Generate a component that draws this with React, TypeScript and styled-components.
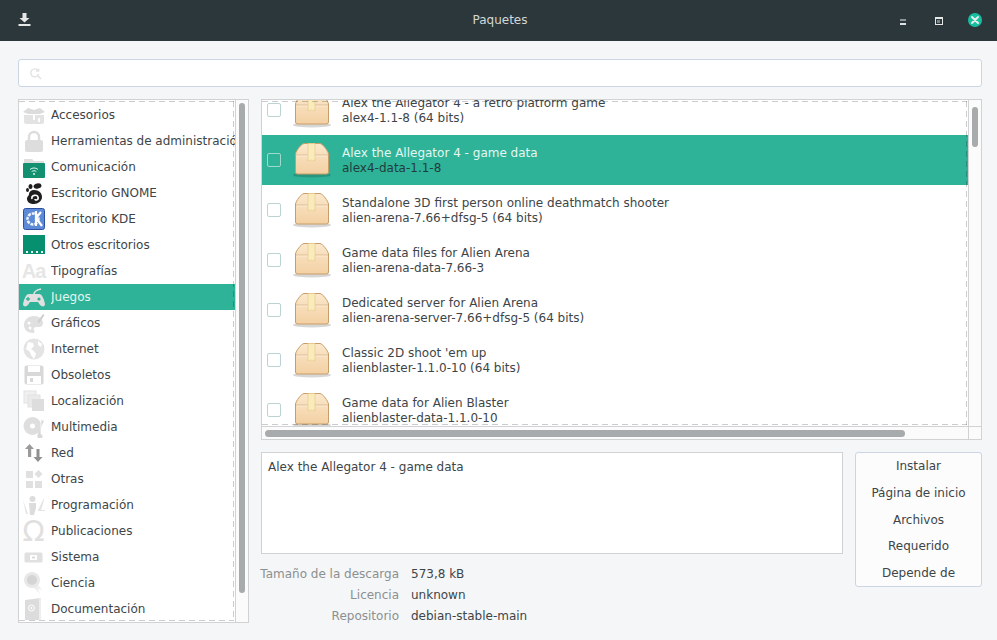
import React from "react";
import styled, { createGlobalStyle } from "styled-components";

const Global = createGlobalStyle`
  html, body { margin: 0; padding: 0; height: 100%; background: #f5f6f7; }
  body { font-family: "DejaVu Sans", sans-serif; font-size: 12px; color: #3d4548; overflow: hidden; }
  * { box-sizing: border-box; }
`;

const Win = styled.div`
  width: 997px; height: 640px; display: flex; flex-direction: column; background: #f5f6f7;
`;
const TitleBar = styled.header`
  height: 41px; flex: none; background: #2c373c; color: #d3d7d8; display: grid;
  grid-template-columns: 1fr auto 1fr; align-items: center; padding: 0 15px 1px 18px;
`;
const TitleText = styled.div`font-size: 12px; text-align: center; padding-bottom: 1px;`;
const WinButtons = styled.div`display: flex; justify-content: flex-end; align-items: center; gap: 25px;`;
const Content = styled.main`
  flex: 1; display: flex; flex-direction: column; padding: 18px 15px 17px 18px; gap: 12px; min-height: 0;
`;
const Search = styled.div`
  height: 28px; flex: none; background: #fff; border: 1px solid #ccd5e4; border-radius: 3px;
  display: flex; align-items: center; padding-left: 10px;
`;
const Columns = styled.div`
  flex: 1; display: grid; grid-template-columns: 231px 1fr; gap: 12px; min-height: 0;
`;
const Panel = styled.section`
  position: relative; display: flex; background: #fff; border: 1px solid #d0d2d3; overflow: hidden; min-height: 0;
`;
const dash = "rgba(0,0,0,0.2)";
const Dashed = styled.div<{ $right: number; $bottom: number }>`
  position: absolute; left: 0; top: 1px; right: ${p => p.$right}px; bottom: ${p => p.$bottom}px;
  pointer-events: none; z-index: 2;
  background:
    repeating-linear-gradient(90deg, ${dash} 0 6px, transparent 6px 10px) left top / 100% 1px no-repeat,
    repeating-linear-gradient(90deg, ${dash} 0 6px, transparent 6px 10px) left bottom / 100% 1px no-repeat,
    repeating-linear-gradient(180deg, ${dash} 0 6px, transparent 6px 10px) right top / 1px 100% no-repeat;
`;
const SideList = styled.ul`
  list-style: none; margin: 0; padding: 2px 0 0; width: 216px; flex: none; overflow: hidden;
`;
const SideRow = styled.li<{ $on?: boolean }>`
  height: 26px; display: flex; align-items: center; gap: 6px; padding-left: 3px; white-space: nowrap;
  background: ${p => (p.$on ? "#2eb398" : "transparent")};
  color: ${p => (p.$on ? "#e4f6f1" : "#3d4548")};
`;
const SideLabel = styled.span`flex: 1; min-width: 0; overflow: hidden; line-height: 16px;`;
const SideIcon = styled.span`
  width: 23px; height: 24px; flex: none; display: flex; align-items: center; justify-content: center;
`;
const OmegaIcon = styled.span`
  font-size: 29px; line-height: 24px; color: #e0e0e0; font-family: "DejaVu Sans", sans-serif;
`;
const AaIcon = styled.span`
  font-size: 20px; font-weight: 700; line-height: 24px; color: #e6e6e6; letter-spacing: -1px;
  font-family: "Liberation Sans", sans-serif;
`;
const VTrack = styled.div`
  width: 13px; flex: none; margin-left: auto; background: #fbfbfb; border-left: 1px solid #d0d2d3;
  padding-left: 3px;
`;
const VThumb = styled.div<{ $top: number; $h: number }>`
  width: 6px; height: ${p => p.$h}px; margin-top: ${p => p.$top}px; border-radius: 3px; background: #a8abab;
`;
const Right = styled.div`display: flex; flex-direction: column; gap: 12px; min-height: 0;`;
const PkgPanel = styled(Panel)`height: 341px; flex: none; display: grid; grid-template-columns: 1fr 13px; grid-template-rows: 1fr 13px;`;
const PkgList = styled.ul`
  list-style: none; margin: 0; padding: 0; overflow: hidden; min-height: 0;
`;
const PkgRow = styled.li<{ $on?: boolean; $first?: boolean }>`
  height: 50px; flex: none; display: flex; align-items: center; padding-left: 5px;
  margin-top: ${p => (p.$first ? "-15px" : "0")};
  background: ${p => (p.$on ? "#2eb398" : "transparent")};
`;
const Check = styled.span<{ $on?: boolean }>`
  width: 14px; height: 14px; flex: none; border-radius: 2px; margin-right: 12px;
  border: 1px solid ${p => (p.$on ? "#9fd8cc" : "#bcd3d3")};
`;
const PkgText = styled.div<{ $on?: boolean }>`
  margin-left: 11px; line-height: 15px; white-space: nowrap; padding-top: 1px;
  & > div:first-child { color: ${p => (p.$on ? "#e4f6f1" : "#3d4548")}; }
  & > div:last-child { color: ${p => (p.$on ? "#223c3c" : "#3d4548")}; }
`;
const HTrack = styled.div`
  background: #fbfbfb; border-top: 1px solid #d0d2d3; display: flex; align-items: center; padding-left: 3px;
`;
const HThumb = styled.div`width: 640px; height: 7px; border-radius: 4px; background: #a8abab;`;
const Corner = styled.div`background: #fbfbfb; border-top: 1px solid #d0d2d3; border-left: 1px solid #d0d2d3;`;
const Bottom = styled.div`flex: 1; display: grid; grid-template-columns: 582px 127px; gap: 12px; min-height: 0;`;
const DetailCol = styled.div`display: flex; flex-direction: column;`;
const Desc = styled.div`
  height: 102px; flex: none; background: #fff; border: 1px solid #d0d2d3; padding: 7px 6px;
`;
const Meta = styled.dl`
  margin: 9px 0 0; display: grid; grid-template-columns: 138px 1fr; column-gap: 12px; grid-auto-rows: 21px; align-items: center;
`;
const MetaKey = styled.dt`color: #8b9091; text-align: right; white-space: nowrap; direction: rtl;`;
const MetaVal = styled.dd`margin: 0; color: #3d4548;`;
const Actions = styled.div`
  height: 135px; background: #fcfcfc; border: 1px solid #ccd5e4; border-radius: 3px;
  display: flex; flex-direction: column;
`;
const Action = styled.button`
  height: 26.7px; flex: none; background: none; border: 0; padding: 0; font: inherit; color: #3d4548; text-align: center;
`;

const Gray = "#dcdcdc";
const Svg = ({ children, w = 22, h = 22 }: { children: React.ReactNode; w?: number; h?: number }) => (
  <svg width={w} height={h} viewBox={`0 0 ${w} ${h}`} style={{ display: "block", flex: "none" }}>{children}</svg>
);

const DownloadIcon = () => (
  <Svg w={13} h={14}>
    <path d="M4.500 0h4v5h3L6.500 9.500 1.500 5h3z" fill="#e6e8e8" />
    <rect x="0.500" y="11" width="12" height="2" fill="#e6e8e8" />
  </Svg>
);
const MinIcon = () => (
  <Svg w={10} h={14}>
    <rect y="6" width="6" height="2" fill="#8b9496" />
    <rect y="10" width="6" height="2" fill="#dfe2e2" />
  </Svg>
);
const MaxIcon = () => (
  <Svg w={8} h={14}>
    <rect x="0.500" y="4.500" width="7" height="7" fill="#2c373c" stroke="#e6e8e8" />
    <rect x="1" y="5" width="6" height="1" fill="#e6e8e8" />
    <path d="M2 7h3v3H2z" fill="#7d8688" />
  </Svg>
);
const CloseIcon = () => (
  <Svg w={14} h={14}>
    <circle cx="7" cy="7" r="7" fill="#17bfa0" />
    <path d="M4 4l6 6M10 4l-6 6" stroke="#e8eceb" strokeWidth="2" strokeLinecap="round" />
  </Svg>
);
const SearchIcon = () => (
  <Svg w={13} h={13}>
    <path d="M9 3.500A4 4 0 1 0 9.600 7M9.600 1.500v2.600H7" fill="none" stroke="#e3e3e3" strokeWidth="1.400" />
    <path d="M8.500 8.500l3.500 3.500" stroke="#e3e3e3" strokeWidth="1.600" />
  </Svg>
);
const BoxIcon = () => (
  <Svg w={38} h={36}>
    <defs>
      <linearGradient id="boxg" x1="0" x2="0" y1="0" y2="1">
        <stop offset="0" stopColor="#fbe8cc" />
        <stop offset="1" stopColor="#f3d0a3" />
      </linearGradient>
    </defs>
    <ellipse cx="19" cy="33" rx="19" ry="2.500" fill="#000" opacity="0.16" />
    <path d="M2.500 12C3 9 8 2 11 1.500H27C30 2 35 9 35.500 12V30a2 2 0 0 1-2 2H4.500a2 2 0 0 1-2-2z" fill="url(#boxg)" stroke="#c79e69" />
    <path d="M3 13H35" stroke="#dfbd92" />
    <path d="M3.500 14H34.500" stroke="#fff" opacity=".45" />
    <path d="M15 1.500h7V19l-1.200-1-1.100 1-1.200-1-1.200 1-1.100-1-1.200 1z" fill="#f9ebbb" stroke="#e6c98b" strokeWidth=".7" />
  </Svg>
);

const Accessories = () => (
  <Svg>
    <path d="M0 8l5-4 6 2 6-2 5 4-5 2H5z" fill={Gray} />
    <path d="M1 11h20v7a2 2 0 0 1-2 2H3a2 2 0 0 1-2-2z" fill="#e3e3e3" />
    <rect x="10" y="10" width="2" height="6" fill="#fff" />
    <rect x="15" y="14" width="2" height="4" fill="#fff" />
  </Svg>
);
const Lock = () => (
  <Svg w={20} h={22}>
    <path d="M5 10V7a5 5 0 0 1 10 0v3" fill="none" stroke="#dddddd" strokeWidth="2.400" />
    <rect x="1" y="10" width="18" height="12" rx="2" fill="#dddddd" />
  </Svg>
);
const CommIcon = () => (
  <Svg>
    <path d="M1 3h8l2 2h10v4H1z" fill="#dedede" />
    <rect y="7" width="22" height="15" rx="1" fill="#129070" />
    <path d="M7 13.500c2.500-2 5.500-2 8 0M8.700 15.500c1.500-1 3.100-1 4.600 0" fill="none" stroke="#dff3ee" strokeWidth="1" />
    <circle cx="11" cy="18" r="1" fill="#dff3ee" />
  </Svg>
);
const Gnome = () => (
  <Svg w={18} h={21}>
    <path d="M9 7c5 0 8 3 8 7s-4 7-8 7c-4 0-7-2-7-5s2-3 2-5 2-4 5-4z" fill="#1f1f1f" />
    <path d="M7 16c-1-4 5-5 6-2s-3 4-3 2" fill="none" stroke="#fff" strokeWidth="1.600" />
    <ellipse cx="2.500" cy="7" rx="1.500" ry="2" fill="#1f1f1f" />
    <ellipse cx="5.500" cy="3.500" rx="2" ry="2.500" fill="#1f1f1f" />
    <ellipse cx="12.500" cy="3" rx="4" ry="2.600" fill="#1f1f1f" transform="rotate(-15 12.500 3)" />
  </Svg>
);
const Kde = () => (
  <Svg>
    <rect x=".5" y=".5" width="21" height="21" rx="2" fill="#5c8ad6" stroke="#2c50a0" />
    <circle cx="10" cy="11" r="5.500" fill="none" stroke="#f0f4fb" strokeWidth="2.500" strokeDasharray="3 1" />
    <path d="M13 3v15M13 10l5-6M13 10l6 8" stroke="#fff" strokeWidth="2.200" fill="none" />
  </Svg>
);
const OtherDesk = () => (
  <Svg>
    <rect width="22" height="19" y="1" fill="#069070" />
    <path d="M3 17h2v2H3zM8 17h2v2H8zM13 17h2v2h-2zM18 17h2v2h-2z" fill="#e8f4f0" />
  </Svg>
);
const Gamepad = ({ c = "#e0e0e0" }: { c?: string }) => (
  <Svg>
    <path d="M11 8c0-3 3-4 7-5" fill="none" stroke={c} strokeWidth="1.600" />
    <path d="M6 8h10c3 0 5 5 6 10 0 3-3 3-5 1l-2-3H7l-2 3c-2 2-5 2-5-1C1 13 3 8 6 8z" fill={c} />
    <path d="M5 11v4M3 13h4" stroke="#2eb398" strokeWidth="1.300" />
    <circle cx="16" cy="13" r="1.600" fill="#2eb398" />
  </Svg>
);
const Palette = () => (
  <Svg>
    <path d="M11 4C5 4 1 8 1 13s4 8 9 8c2 0 2-2 1-3s0-3 2-3h3c3 0 4-2 4-4 0-4-4-7-9-7z" fill="#e0e0e0" />
    <path d="M14 10l6-8 1.500 1-5 8z" fill="#d0d0d0" />
    <circle cx="6" cy="11" r="1.500" fill="#fff" /><circle cx="7" cy="16" r="1.500" fill="#fff" />
  </Svg>
);
const Globe = () => (
  <Svg>
    <circle cx="11" cy="11" r="10.500" fill="#e4e4e4" />
    <path d="M5 4l5 1 1 3-3 3 3 2 2 3-2 5-3-4-1-3-4-3zM15 3l4 3-1 3-3-2z" fill="#fff" />
  </Svg>
);
const Floppy = () => (
  <Svg w={20} h={20}>
    <rect x=".5" y=".5" width="19" height="19" rx="2" fill="#d8d8d8" />
    <rect x="4" y="1" width="12" height="6" fill="#fff" />
    <rect x="3" y="11" width="14" height="8" fill="#fff" />
    <rect x="6" y="13" width="3" height="4" fill="#d8d8d8" />
  </Svg>
);
const Pages = () => (
  <Svg>
    <rect x="1" y="1" width="12" height="12" fill="#f0f0f0" stroke="#e2e2e2" />
    <rect x="5" y="5" width="12" height="12" fill="#eaeaea" stroke="#e2e2e2" />
    <rect x="9" y="9" width="12" height="12" fill="#dddddd" />
  </Svg>
);
const Disc = () => (
  <Svg>
    <circle cx="9.500" cy="10" r="9" fill="#dedede" />
    <circle cx="9.500" cy="10" r="2.500" fill="#fff" />
    <path d="M14 20a3 2.500 0 1 0 4-2V3l3 2" fill="#d8d8d8" stroke="#fff" strokeWidth=".8" />
  </Svg>
);
const Arrows = () => (
  <Svg w={18} h={18}>
    <path d="M4.500 0 9 5H6.200v8H3V5H0z" fill="#9a9a9a" />
    <path d="M13 18l4.500-5h-3V5h-3v8H8.500z" fill="#8f8f8f" />
  </Svg>
);
const Grid = () => (
  <Svg w={18} h={18}>
    <rect x="1" y="1" width="7" height="7" fill="#e0e0e0" />
    <path d="M13.500 0l4 4-4 4-4-4z" fill="#e0e0e0" />
    <rect x="1" y="11" width="7" height="7" fill="#e0e0e0" />
    <rect x="10" y="11" width="7" height="7" fill="#e0e0e0" />
  </Svg>
);
const Dev = () => (
  <Svg>
    <circle cx="9.500" cy="5" r="3" fill="#dcdcdc" />
    <path d="M6 9h7v5l-2 7H7z" fill="#dcdcdc" />
    <path d="M0 6l5 14h-2zM15 16l6-12v2l-3 10h4v1h-7z" fill="#e4e4e4" />
  </Svg>
);
const Sys = () => (
  <Svg w={19} h={11}>
    <rect x=".5" y=".5" width="18" height="10" rx="1.500" fill="#e0e0e0" />
    <rect x="6" y="3" width="7" height="5" fill="#fff" />
    <rect x="8" y="4.500" width="3" height="2" fill="#dcdcdc" />
  </Svg>
);
const Award = () => (
  <Svg>
    <path d="M8 13l9 9-2-5 4 1-7-9z" fill="#efefef" />
    <circle cx="9" cy="8" r="8" fill="#e8e8e8" />
    <circle cx="9" cy="8" r="5" fill="#d4d4d4" />
  </Svg>
);
const Doc = () => (
  <Svg w={17} h={22}>
    <path d="M0 2l16-2v22H0z" fill="#dcdcdc" />
    <path d="M14 0.500h2V22h-2z" fill="#eeeeee" />
    <circle cx="6.500" cy="10" r="3" fill="none" stroke="#fff" />
    <circle cx="6.500" cy="10" r="1" fill="#fff" />
  </Svg>
);

const categories: { label: string; icon: React.ReactNode; on?: boolean }[] = [
  { label: "Accesorios", icon: <Accessories /> },
  { label: "Herramientas de administración", icon: <Lock /> },
  { label: "Comunicación", icon: <CommIcon /> },
  { label: "Escritorio GNOME", icon: <Gnome /> },
  { label: "Escritorio KDE", icon: <Kde /> },
  { label: "Otros escritorios", icon: <OtherDesk /> },
  { label: "Tipografías", icon: <AaIcon>Aa</AaIcon> },
  { label: "Juegos", icon: <Gamepad />, on: true },
  { label: "Gráficos", icon: <Palette /> },
  { label: "Internet", icon: <Globe /> },
  { label: "Obsoletos", icon: <Floppy /> },
  { label: "Localización", icon: <Pages /> },
  { label: "Multimedia", icon: <Disc /> },
  { label: "Red", icon: <Arrows /> },
  { label: "Otras", icon: <Grid /> },
  { label: "Programación", icon: <Dev /> },
  { label: "Publicaciones", icon: <OmegaIcon>Ω</OmegaIcon> },
  { label: "Sistema", icon: <Sys /> },
  { label: "Ciencia", icon: <Award /> },
  { label: "Documentación", icon: <Doc /> },
];

const packages: { title: string; name: string; on?: boolean }[] = [
  { title: "Alex the Allegator 4 - a retro platform game", name: "alex4-1.1-8 (64 bits)" },
  { title: "Alex the Allegator 4 - game data", name: "alex4-data-1.1-8", on: true },
  { title: "Standalone 3D first person online deathmatch shooter", name: "alien-arena-7.66+dfsg-5 (64 bits)" },
  { title: "Game data files for Alien Arena", name: "alien-arena-data-7.66-3" },
  { title: "Dedicated server for Alien Arena", name: "alien-arena-server-7.66+dfsg-5 (64 bits)" },
  { title: "Classic 2D shoot 'em up", name: "alienblaster-1.1.0-10 (64 bits)" },
  { title: "Game data for Alien Blaster", name: "alienblaster-data-1.1.0-10" },
];

const meta = [
  ["Tamaño de la descarga", "573,8 kB"],
  ["Licencia", "unknown"],
  ["Repositorio", "debian-stable-main"],
];
const actions = ["Instalar", "Página de inicio", "Archivos", "Requerido", "Depende de"];

export default function App() {
  return (
    <Win>
      <Global />
      <TitleBar>
        <DownloadIcon />
        <TitleText>Paquetes</TitleText>
        <WinButtons>
          <MinIcon />
          <MaxIcon />
          <CloseIcon />
        </WinButtons>
      </TitleBar>
      <Content>
        <Search><SearchIcon /></Search>
        <Columns>
          <Panel>
            <SideList>
              {categories.map(c => (
                <SideRow key={c.label} $on={c.on}>
                  <SideIcon>{c.icon}</SideIcon>
                  <SideLabel>{c.label}</SideLabel>
                </SideRow>
              ))}
            </SideList>
            <VTrack><VThumb $top={3} $h={490} /></VTrack>
            <Dashed $right={14} $bottom={1} />
          </Panel>
          <Right>
            <PkgPanel>
              <PkgList>
                {packages.map((p, i) => (
                  <PkgRow key={p.name} $on={p.on} $first={i === 0}>
                    <Check $on={p.on} />
                    <BoxIcon />
                    <PkgText $on={p.on}>
                      <div>{p.title}</div>
                      <div>{p.name}</div>
                    </PkgText>
                  </PkgRow>
                ))}
              </PkgList>
              <VTrack><VThumb $top={7} $h={40} /></VTrack>
              <HTrack><HThumb /></HTrack>
              <Corner />
              <Dashed $right={14} $bottom={14} />
            </PkgPanel>
            <Bottom>
              <DetailCol>
                <Desc>Alex the Allegator 4 - game data</Desc>
                <Meta>
                  {meta.map(([k, v]) => (
                    <React.Fragment key={k}>
                      <MetaKey>{k}</MetaKey>
                      <MetaVal>{v}</MetaVal>
                    </React.Fragment>
                  ))}
                </Meta>
              </DetailCol>
              <Actions>
                {actions.map(a => <Action key={a}>{a}</Action>)}
              </Actions>
            </Bottom>
          </Right>
        </Columns>
      </Content>
    </Win>
  );
}
